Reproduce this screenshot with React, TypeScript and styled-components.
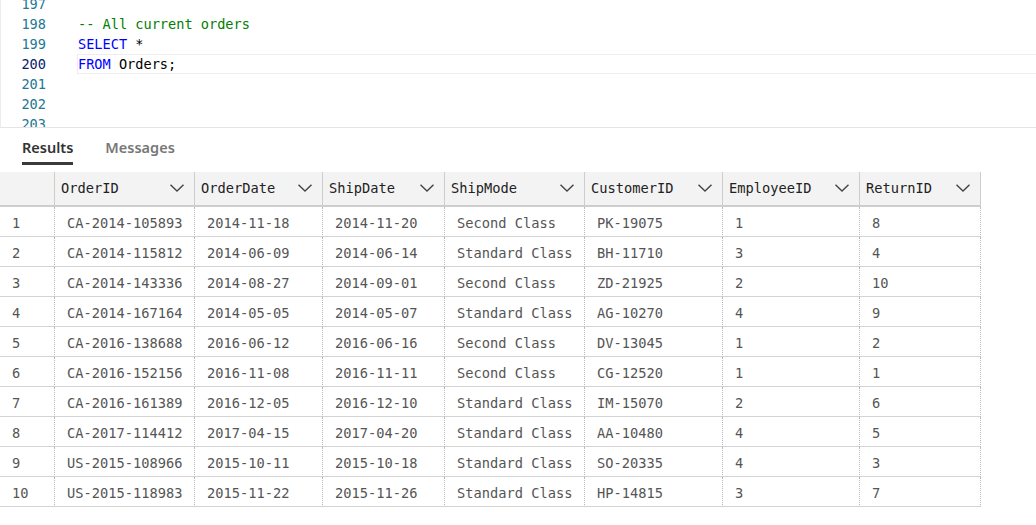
import React from "react";
import styled, { createGlobalStyle } from "styled-components";

const Global = createGlobalStyle`
  html, body { margin: 0; padding: 0; background: #fff; }
  body { font-family: "Noto Sans", "DejaVu Sans", sans-serif; overflow: hidden; }
  * { box-sizing: border-box; }
`;

const MONO = `"DejaVu Sans Mono", "Liberation Mono", monospace`;

const Page = styled.div`
  width: 1036px;
  height: 525px;
  display: flex;
  flex-direction: column;
  background: #fff;
`;

const Editor = styled.div`
  height: 128px;
  border-bottom: 1px solid #e4e4e4;
  border-left: 1px solid #ececec;
  overflow: hidden;
  flex: none;
`;

const Lines = styled.div`
  margin-top: -6px;
  display: flex;
  flex-direction: column;
`;

const Line = styled.div`
  display: flex;
  height: 20px;
  align-items: center;
`;

const LineNo = styled.div<{ $active?: boolean }>`
  width: 45px;
  flex: none;
  text-align: right;
  font-family: ${MONO};
  font-size: 13.6px;
  color: ${(p) => (p.$active ? "#0b216f" : "#237893")};
`;

const Code = styled.div<{ $active?: boolean }>`
  margin-left: 31px;
  flex: 1;
  height: 20px;
  display: flex;
  align-items: center;
  font-family: ${MONO};
  font-size: 13.6px;
  white-space: pre;
  color: #000;
  border: 1px solid ${(p) => (p.$active ? "#eeeeee" : "transparent")};
  border-right: none;
`;

const Tok = styled.span<{ $c: string }>`
  color: ${(p) => p.$c};
`;

const TabBar = styled.div`
  height: 44px;
  flex: none;
  display: flex;
  gap: 32px;
  padding: 0 22px;
  align-items: flex-start;
`;

const Tab = styled.div<{ $active?: boolean }>`
  height: 37px;
  padding-top: 9px;
  font-size: 14.5px;
  font-weight: 600;
  color: ${(p) => (p.$active ? "#333" : "#777")};
  border-bottom: 3px solid ${(p) => (p.$active ? "#3a3a3a" : "transparent")};
  line-height: 20px;
`;

const COLS = "55px 140px 128px 122px 140px 138px 137px 121px";

const Grid = styled.div`
  display: grid;
  grid-template-columns: ${COLS};
  width: 981px;
`;

const HeadCell = styled.div`
  height: 35px;
  background: #f3f3f3;
  border-right: 1px solid #cdcdcd;
  border-bottom: 2px solid #cdcdcd;
  display: flex;
  align-items: center;
  justify-content: space-between;
  padding: 0 9px 1px 6px;
  font-family: ${MONO};
  font-size: 13.7px;
  color: #222;
`;

const Cell = styled.div<{ $first?: boolean }>`
  height: 30px;
  border-bottom: 1px solid #d4d4d4;
  border-right: 1px dotted #b8b8b8;
  display: flex;
  align-items: center;
  padding: 3px 0 0 12px;
  font-family: ${MONO};
  font-size: 13.7px;
  color: #555;
  white-space: nowrap;
`;

const Chevron = () => (
  <svg width="16" height="10" viewBox="0 0 16 10" fill="none">
    <polyline points="1.5,1.8 8,8 14.5,1.8" stroke="#444" strokeWidth="1.4" />
  </svg>
);

const headers = ["OrderID", "OrderDate", "ShipDate", "ShipMode", "CustomerID", "EmployeeID", "ReturnID"];

const rows: string[][] = [
  ["CA-2014-105893", "2014-11-18", "2014-11-20", "Second Class", "PK-19075", "1", "8"],
  ["CA-2014-115812", "2014-06-09", "2014-06-14", "Standard Class", "BH-11710", "3", "4"],
  ["CA-2014-143336", "2014-08-27", "2014-09-01", "Second Class", "ZD-21925", "2", "10"],
  ["CA-2014-167164", "2014-05-05", "2014-05-07", "Standard Class", "AG-10270", "4", "9"],
  ["CA-2016-138688", "2016-06-12", "2016-06-16", "Second Class", "DV-13045", "1", "2"],
  ["CA-2016-152156", "2016-11-08", "2016-11-11", "Second Class", "CG-12520", "1", "1"],
  ["CA-2016-161389", "2016-12-05", "2016-12-10", "Standard Class", "IM-15070", "2", "6"],
  ["CA-2017-114412", "2017-04-15", "2017-04-20", "Standard Class", "AA-10480", "4", "5"],
  ["US-2015-108966", "2015-10-11", "2015-10-18", "Standard Class", "SO-20335", "4", "3"],
  ["US-2015-118983", "2015-11-22", "2015-11-26", "Standard Class", "HP-14815", "3", "7"],
];

export default function App() {
  return (
    <Page>
      <Global />
      <Editor>
        <Lines>
          <Line>
            <LineNo>197</LineNo>
            <Code />
          </Line>
          <Line>
            <LineNo>198</LineNo>
            <Code>
              <Tok $c="#008000">-- All current orders</Tok>
            </Code>
          </Line>
          <Line>
            <LineNo>199</LineNo>
            <Code>
              <Tok $c="#0000ff">SELECT</Tok> *
            </Code>
          </Line>
          <Line>
            <LineNo $active>200</LineNo>
            <Code $active>
              <Tok $c="#0000ff">FROM</Tok> Orders;
            </Code>
          </Line>
          <Line>
            <LineNo>201</LineNo>
            <Code />
          </Line>
          <Line>
            <LineNo>202</LineNo>
            <Code />
          </Line>
          <Line>
            <LineNo>203</LineNo>
            <Code />
          </Line>
        </Lines>
      </Editor>
      <TabBar>
        <Tab $active>Results</Tab>
        <Tab>Messages</Tab>
      </TabBar>
      <Grid>
        <HeadCell />
        {headers.map((h) => (
          <HeadCell key={h}>
            <span>{h}</span>
            <Chevron />
          </HeadCell>
        ))}
        {rows.map((r, i) => (
          <React.Fragment key={i}>
            <Cell $first>{i + 1}</Cell>
            {r.map((v, j) => (
              <Cell key={j}>{v}</Cell>
            ))}
          </React.Fragment>
        ))}
      </Grid>
    </Page>
  );
}
